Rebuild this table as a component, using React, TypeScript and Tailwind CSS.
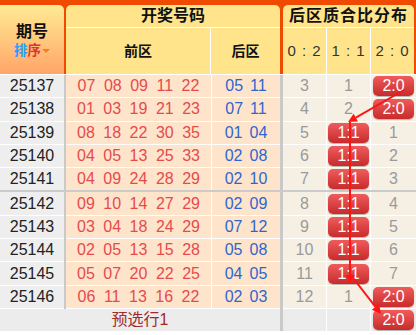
import React from "react";

type Row = { p: string; f: string[]; b: string[]; c: (string | number)[] };

const rows: Row[] = [
  { p: "25137", f: ["07", "08", "09", "11", "22"], b: ["05", "11"], c: [3, 1, "2:0"] },
  { p: "25138", f: ["01", "03", "19", "21", "23"], b: ["07", "11"], c: [4, 2, "2:0"] },
  { p: "25139", f: ["08", "18", "22", "30", "35"], b: ["01", "04"], c: [5, "1:1", 1] },
  { p: "25140", f: ["04", "05", "13", "25", "33"], b: ["02", "08"], c: [6, "1:1", 2] },
  { p: "25141", f: ["04", "09", "24", "28", "29"], b: ["02", "10"], c: [7, "1:1", 3] },
  { p: "25142", f: ["09", "10", "14", "27", "29"], b: ["02", "09"], c: [8, "1:1", 4] },
  { p: "25143", f: ["03", "04", "18", "24", "29"], b: ["07", "12"], c: [9, "1:1", 5] },
  { p: "25144", f: ["02", "05", "13", "15", "28"], b: ["05", "08"], c: [10, "1:1", 6] },
  { p: "25145", f: ["05", "07", "20", "22", "25"], b: ["04", "05"], c: [11, "1:1", 7] },
  { p: "25146", f: ["06", "11", "13", "16", "22"], b: ["02", "03"], c: [12, 1, "2:0"] },
];

function Badge({ t }: { t: string }) {
  return (
    <div className="mx-auto h-[20px] w-[41px] rounded-[5px] bg-[linear-gradient(#ef5c5c,#c82b2b)] text-center text-[16px] leading-[20px] text-white shadow-[0_1px_1px_rgba(0,0,0,0.25)]">
      {t}
    </div>
  );
}

function Cell({ v }: { v: string | number }) {
  if (typeof v === "string") return <Badge t={v} />;
  return <span className="text-[#9a9a9a]">{v}</span>;
}

function DataRow({ r, last }: { r: Row; last: boolean }) {
  const bb = last ? "" : "border-b border-white";
  const h = last ? "h-[22.3px]" : "h-[23.3px]";
  return (
    <div className={`flex ${h}`}>
      <div className={`flex w-[64px] items-center justify-center bg-[#eeeeee] text-[#222] ${bb}`}>{r.p}</div>
      <div className="w-[2px] bg-[#c9c9c9]" />
      <div className={`flex w-[145px] items-center justify-center gap-[8.5px] bg-[#ffe4cc] text-[#e54b4b] ${bb}`}>
        {r.f.map((n, i) => (
          <span key={i}>{n}</span>
        ))}
      </div>
      <div className="w-[1px] bg-white" />
      <div className={`flex w-[68px] items-center justify-center gap-[7px] bg-[#ffe4cc] text-[#2f66cc] ${bb}`}>
        {r.b.map((n, i) => (
          <span key={i}>{n}</span>
        ))}
      </div>
      <div className="w-[3px] bg-[#c9c9c9]" />
      <div className={`flex w-[43px] items-center justify-center bg-[#f6f0e4] ${bb}`}>
        <Cell v={r.c[0]} />
      </div>
      <div className="w-[1px] bg-white" />
      <div className={`flex w-[43px] items-center justify-center bg-[#f6f0e4] ${bb}`}>
        <Cell v={r.c[1]} />
      </div>
      <div className="w-[1px] bg-white" />
      <div className={`flex flex-1 items-center justify-center bg-[#f6f0e4] ${bb}`}>
        <Cell v={r.c[2]} />
      </div>
    </div>
  );
}

export default function App() {
  return (
    <div className="relative h-[335px] w-[416px] overflow-hidden bg-white font-['Liberation_Sans_Narrow','Liberation_Sans','Noto_Sans_CJK_SC',sans-serif] text-[16px]">
      {/* Header */}
      <div className="flex h-[74px] gap-[2px] bg-[#f04a00] pt-[5px] pr-[2px]">
        <div className="flex w-[64px] flex-col items-center justify-center rounded-tr-[5px] bg-[linear-gradient(#ffeb94,#ffa567)] pt-[2px]">
          <div className="text-[16px] font-bold leading-[20px] text-[#111]">期号</div>
          <div className="flex items-center text-[13.5px] font-bold leading-[18px]">
            <span className="text-[#2f9bff]">排</span>
            <span className="text-[#e03333]">序</span>
            <span className="ml-[1px] h-0 w-0 border-x-[4px] border-t-[4px] border-x-transparent border-t-[#ff7a1a]" />
          </div>
        </div>
        <div className="flex w-[214px] flex-col overflow-hidden rounded-t-[5px] bg-[#ffe48b]">
          <div className="flex h-[23px] items-center justify-center border-b border-white text-[16px] font-bold text-[#111]">
            开奖号码
          </div>
          <div className="flex flex-1">
            <div className="flex w-[145px] items-center justify-center border-r border-white text-[14px] font-bold text-[#111]">
              前区
            </div>
            <div className="flex flex-1 items-center justify-center text-[14px] font-bold text-[#111]">后区</div>
          </div>
        </div>
        <div className="ml-[1px] flex flex-1 flex-col overflow-hidden rounded-t-[5px] bg-[#ffe48b]">
          <div className="flex h-[23px] items-center justify-center border-b border-white text-[16px] font-bold tracking-[1px] text-[#111]">
            后区质合比分布
          </div>
          <div className="flex flex-1 text-[15px] tracking-[1px] text-[#333]">
            <div className="flex w-[44px] items-center justify-center border-r border-white">0 : 2</div>
            <div className="flex w-[44px] items-center justify-center border-r border-white">1 : 1</div>
            <div className="flex flex-1 items-center justify-center">2 : 0</div>
          </div>
        </div>
      </div>
      <div className="h-[1px] bg-white" />
      {/* Body */}
      {rows.slice(0, 5).map((r, i) => (
        <DataRow key={r.p} r={r} last={i === 4} />
      ))}
      <div className="h-[2px] bg-[#cbcbcb]" />
      {rows.slice(5).map((r) => (
        <DataRow key={r.p} r={r} last={false} />
      ))}
      {/* Footer */}
      <div className="flex h-[24px] border-b-2 border-white bg-[#ececec]">
        <div className="flex w-[280px] items-center justify-center text-[16px] text-[#a32a2a]">预选行1</div>
        <div className="w-[3px] bg-[#c9c9c9]" />
        <div className="w-[43px]" />
        <div className="w-[1px] bg-white" />
        <div className="w-[43px]" />
        <div className="w-[1px] bg-white" />
        <div className="flex flex-1 items-center justify-center">
          <Badge t="2:0" />
        </div>
      </div>
      {/* Arrows */}
      <svg className="pointer-events-none absolute left-0 top-0" width={416} height={335}>
        <g stroke="#ff1414" strokeWidth={2} fill="none">
          <line x1={404} y1={90} x2={355.8} y2={117.6} />
          <line x1={350} y1={122} x2={350} y2={276} />
          <line x1={350} y1={274} x2={375.5} y2={306.9} />
        </g>
        <g fill="#ff1414">
          <polygon points="348,122 358,121.5 353.6,113.7" />
          <polygon points="350,284 345.5,275 354.5,275" />
          <polygon points="381,314 371.9,309.7 379.1,304.1" />
        </g>
      </svg>
    </div>
  );
}
